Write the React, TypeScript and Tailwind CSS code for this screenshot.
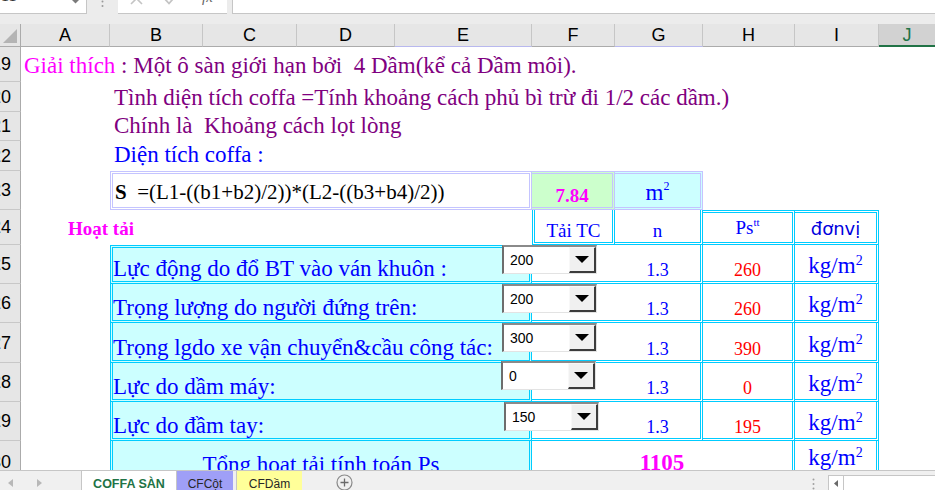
import React from "react";

const COLS = "grid grid-cols-[21px_89px_93px_94px_98px_137px_83px_88px_92px_84px_1fr]";

function RowHead({ n }: { n: string }) {
  return (
    <div className="flex items-center justify-end overflow-hidden border-b border-r border-b-[#c8c8c8] border-r-[#ababab] bg-[#e6e6e6] pr-[9px] font-['Liberation_Sans',sans-serif] text-[18px] leading-none text-black">
      <span className="whitespace-nowrap">{n}</span>
    </div>
  );
}

function Row({ h, n, children }: { h: string; n: string; children?: React.ReactNode }) {
  return (
    <div className={`${COLS} ${h}`}>
      <RowHead n={n} />
      {children}
    </div>
  );
}

function Combo({ v, pos }: { v: string; pos: string }) {
  return (
    <div
      className={`absolute z-10 flex h-[29px] w-[95px] border-b border-l-2 border-r border-t-2 border-b-[#e3e3e3] border-l-[#6d6d6d] border-r-[#e3e3e3] border-t-[#8a8a8a] bg-white ${pos}`}
    >
      <div className="flex flex-1 items-center pl-[6px] font-['Liberation_Sans',sans-serif] text-[14px] leading-none text-black">
        {v}
      </div>
      <div className="flex w-[27px] items-center justify-center border-b-2 border-l border-r-2 border-t border-b-[#3c3c3c] border-l-[#f8f8f8] border-r-[#3c3c3c] border-t-[#f8f8f8] bg-[#f0f0f0]">
        <svg width="14" height="7" viewBox="0 0 14 7">
          <polygon points="0,0 14,0 7,7" fill="#000" />
        </svg>
      </div>
    </div>
  );
}

function KgM2({ pb }: { pb: string }) {
  return (
    <div
      className={`flex items-end justify-center border-b-[3px] border-r-[3px] border-double border-[#00ccff] text-[23px] leading-none text-[#0000ff] ${pb}`}
    >
      <span>
        kg/m<sup className="relative top-[-8px] text-[14px] leading-none">2</sup>
      </span>
    </div>
  );
}

function LoadRow({
  n,
  h,
  label,
  combo,
  ps,
  first,
  comboPos,
}: {
  n: string;
  h: string;
  label: string;
  combo: string;
  ps: string;
  first?: boolean;
  comboPos: string;
}) {
  const be = first
    ? "relative col-span-4 flex items-end whitespace-nowrap border-b-[3px] border-l-[3px] border-r-[3px] border-t-[3px] border-double border-[#00ccff] bg-[#ccffff] pb-[1px] text-[23px] leading-none text-[#0000ff]"
    : "relative col-span-4 flex items-end whitespace-nowrap border-b-[3px] border-l-[3px] border-r-[3px] border-double border-[#00ccff] bg-[#ccffff] pb-[1px] text-[23px] leading-none text-[#0000ff]";
  return (
    <Row h={h} n={n}>
      <div />
      <div className={be}>
        <span>{label}</span>
        <Combo v={combo} pos={comboPos} />
      </div>
      <div className="col-span-2 grid grid-cols-[83px_1fr] border-b-[3px] border-r-[3px] border-double border-[#00ccff]">
        <div />
        <div className="flex items-end justify-center pb-[2px] text-[18px] leading-none text-[#0000ff]">1.3</div>
      </div>
      <div className="flex items-end justify-center border-b-[3px] border-r-[3px] border-double border-[#00ccff] pb-[2px] text-[18px] leading-none text-[#ff0000]">
        {ps}
      </div>
      <KgM2 pb="pb-[4px]" />
    </Row>
  );
}

const LETTERS = ["A", "B", "C", "D", "E", "F", "G", "H", "I"];

export default function App() {
  return (
    <div className="flex h-[490px] w-[935px] flex-col overflow-hidden bg-white font-['Liberation_Serif',serif]">
      {/* formula bar (cut off at top) */}
      <div className="flex h-[24px] shrink-0 items-start bg-[#ececec]">
        <div className="flex h-[14px] w-[87px] justify-between overflow-hidden border-b border-r border-[#c6c6c6] bg-white">
          <div className="mt-[-12px] pl-[1px] font-['Liberation_Serif',serif] text-[16px] leading-none text-[#333]">11</div>
          <svg className="mr-[7px] mt-[0px]" width="7" height="4" viewBox="0 0 7 4">
            <polygon points="0,0 7,0 3.5,3.5" fill="#7a7a7a" />
          </svg>
        </div>
        <div className="flex h-[14px] w-[31px] justify-center">
          <svg width="3" height="8" viewBox="0 0 3 8">
            <circle cx="1.5" cy="1.5" r="1" fill="#9a9a9a" />
            <circle cx="1.5" cy="6" r="1" fill="#9a9a9a" />
          </svg>
        </div>
        <div className="flex h-[14px] w-[109px] items-start overflow-hidden border-b border-[#c6c6c6] bg-white">
          <svg className="ml-[12px] mt-[-8px]" width="13" height="13" viewBox="0 0 13 13">
            <path d="M1 1 L12 12 M12 1 L1 12" stroke="#c4c4c4" strokeWidth="1.6" />
          </svg>
          <svg className="ml-[20px] mt-[-9px]" width="17" height="14" viewBox="0 0 17 14">
            <path d="M1 7 L6 12.5 L16 1" stroke="#c4c4c4" strokeWidth="1.8" fill="none" />
          </svg>
          <div className="ml-[22px] mt-[-10px] font-['Liberation_Serif',serif] text-[15px] italic leading-none text-[#666]">fx</div>
        </div>
        <div className="ml-[5px] h-[14px] flex-1 border-b border-l border-[#c6c6c6] bg-white" />
      </div>

      {/* sheet */}
      <div className="flex-1 overflow-hidden">
        {/* column headers */}
        <div className={`${COLS} h-[23px] bg-[#e6e6e6] font-['Liberation_Sans',sans-serif] text-[18px] leading-none text-black`}>
          <div className="relative border-b border-r border-b-[#ababab] border-r-[#ababab]">
            <svg className="absolute left-[2px] top-[4px]" width="16" height="16" viewBox="0 0 16 16">
              <polygon points="15,1 15,15 1,15" fill="#b4b4b4" />
            </svg>
          </div>
          {LETTERS.map((l) => (
            <div
              key={l}
              className={
                l === "E" || l === "G"
                  ? "flex items-center justify-center border-b border-r border-b-[#b8b8ee] border-r-[#c6c6c6]"
                  : "flex items-center justify-center border-b border-r border-b-[#ababab] border-r-[#c6c6c6]"
              }
            >
              {l}
            </div>
          ))}
          <div className="flex items-center justify-center border-b-2 border-[#217346] bg-[#d2d2d2] text-[#217346]">J</div>
        </div>

        {/* row 19 */}
        <Row h="h-[35px]" n="19">
          <div className="col-span-10 flex items-end whitespace-pre pb-[5px] pl-[3px] text-[23px] leading-none">
            <span className="text-[#ff00ff]">Giải thích</span>
            <span className="text-[#800080]"> : Một ô sàn giới hạn bởi  4 Dầm(kể cả Dầm môi).</span>
          </div>
        </Row>

        {/* row 20 */}
        <Row h="h-[30px]" n="20">
          <div />
          <div className="col-span-9 flex items-end whitespace-pre pb-[3px] pl-[4px] text-[23px] leading-none text-[#800080]">
            Tình diện tích coffa =Tính khoảng cách phủ bì trừ đi 1/2 các dầm.)
          </div>
        </Row>

        {/* row 21 */}
        <Row h="h-[29px]" n="21">
          <div />
          <div className="col-span-9 flex items-end whitespace-pre pb-[4px] pl-[4px] text-[23px] leading-none text-[#800080]">
            Chính là  Khoảng cách lọt lòng
          </div>
        </Row>

        {/* row 22 */}
        <Row h="h-[30px]" n="22">
          <div />
          <div className="col-span-9 flex items-end whitespace-pre pb-[5px] pl-[4px] text-[23px] leading-none text-[#0000ff]">
            Diện tích coffa :
          </div>
        </Row>

        {/* row 23 */}
        <Row h="h-[39px]" n="23">
          <div />
          <div className="col-span-4 flex items-end whitespace-pre border-[3px] border-double border-[#c4c4ff] pb-[4px] pl-[2px] text-[21px] leading-none text-black">
            <b>S</b>
            <span>  =(L1-((b1+b2)/2))*(L2-((b3+b4)/2))</span>
          </div>
          <div className="flex items-end justify-center border-b-[3px] border-r-[3px] border-t-[3px] border-double border-[#c4c4ff] bg-[#ccffcc] pb-[2px] text-[19px] font-bold leading-none text-[#ff00ff]">
            7.84
          </div>
          <div className="flex items-end justify-center border-b-[3px] border-r-[3px] border-t-[3px] border-double border-[#c4c4ff] bg-[#ccffff] pb-[3px] text-[23px] leading-none text-[#0000ff]">
            <span>
              m<sup className="relative top-[-10px] text-[12px] leading-none">2</sup>
            </span>
          </div>
        </Row>

        {/* row 24 */}
        <Row h="h-[35px]" n="24">
          <div className="col-span-5 flex items-end whitespace-pre pb-[7px] pl-[47px] text-[19px] font-bold leading-none text-[#ff00ff]">
            Hoạt tải
          </div>
          <div className="flex items-end justify-center border-b-[3px] border-l-[3px] border-r-[3px] border-double border-[#00ccff] pb-[2px] text-[19px] leading-none text-[#0000ff]">
            Tải TC
          </div>
          <div className="flex items-end justify-center border-b-[3px] border-r-[3px] border-double border-[#00ccff] pb-[2px] text-[19px] leading-none text-[#0000ff]">
            n
          </div>
          <div className="flex items-end justify-center border-b-[3px] border-r-[3px] border-t-[3px] border-double border-[#00ccff] pb-[5px] text-[19px] leading-none text-[#0000ff]">
            <span>
              Ps<sup className="relative top-[-8px] text-[11px] leading-none">tt</sup>
            </span>
          </div>
          <div className="flex items-end justify-center border-b-[3px] border-r-[3px] border-t-[3px] border-double border-[#00ccff] pb-[4px] font-['DejaVu_Sans',sans-serif] text-[18px] leading-none text-[#0000dd]">
            đơnvị
          </div>
        </Row>

        <LoadRow n="25" h="h-[39px]" label="Lực động do đổ BT vào ván khuôn :" combo="200" ps="260" first comboPos="left-[389px] top-[-3px]" />
        <LoadRow n="26" h="h-[39px]" label="Trọng lượng do người đứng trên:" combo="200" ps="260" comboPos="left-[389px] top-0" />
        <LoadRow n="27" h="h-[40px]" label="Trọng lgdo xe vận chuyển&cầu công tác:" combo="300" ps="390" comboPos="left-[389px] top-0" />
        <LoadRow n="28" h="h-[39px]" label="Lực do dầm máy:" combo="0" ps="0" comboPos="left-[388px] top-[-2px]" />
        <LoadRow n="29" h="h-[39px]" label="Lực do đầm tay:" combo="150" ps="195" comboPos="left-[391px] top-0" />

        {/* row 30 */}
        <Row h="h-[42px]" n="30">
          <div />
          <div className="col-span-4 flex items-end justify-center whitespace-nowrap border-b-[3px] border-l-[3px] border-r-[3px] border-double border-[#00ccff] bg-[#ccffff] pb-[4px] text-[23px] leading-none text-[#0000ff]">
            Tổng hoạt tải tính toán Ps
          </div>
          <div className="col-span-3 flex items-end justify-center border-b-[3px] border-r-[3px] border-double border-[#00ccff] pb-[6px] text-[23px] font-bold leading-none text-[#ff00ff]">
            1105
          </div>
          <KgM2 pb="pb-[11px]" />
        </Row>
      </div>

      {/* sheet tabs */}
      <div className="flex h-[20px] shrink-0 items-stretch border-t border-[#c6c6c6] bg-[#f0f0f0] font-['Liberation_Sans',sans-serif] leading-none">
        <div className="flex w-[82px] items-center gap-[24px] border-r border-[#c6c6c6] pl-[8px] pt-[4px]">
          <svg width="5" height="8" viewBox="0 0 5 8">
            <polygon points="5,0 5,8 0,4" fill="#b8b8b8" />
          </svg>
          <svg width="5" height="8" viewBox="0 0 5 8">
            <polygon points="0,0 0,8 5,4" fill="#b8b8b8" />
          </svg>
        </div>
        <div className="flex w-[94px] items-end justify-center bg-white text-[12.5px] font-bold text-[#217346]">COFFA SÀN</div>
        <div className="flex w-[57px] items-end justify-center border-l border-[#c6c6c6] bg-[#9f9ff7] text-[12px] text-[#262626]">CFCột</div>
        <div className="w-[4px] border-r border-[#c6c6c6]" />
        <div className="flex w-[65px] items-end justify-center bg-[#ffff99] text-[12px] text-[#262626]">CFDầm</div>
        <div className="flex items-center pl-[34px] pt-[4px]">
          <svg width="17" height="17" viewBox="0 0 17 17">
            <circle cx="8.5" cy="8.5" r="7.5" fill="none" stroke="#8a8a8a" strokeWidth="1.2" />
            <path d="M8.5 4.5 V12.5 M4.5 8.5 H12.5" stroke="#6a6a6a" strokeWidth="1.3" />
          </svg>
        </div>
        <div className="flex-1" />
        <div className="flex w-[16px] items-center justify-start pt-[6px]">
          <svg width="3" height="12" viewBox="0 0 3 12">
            <circle cx="1.5" cy="1.5" r="1" fill="#a0a0a0" />
            <circle cx="1.5" cy="6" r="1" fill="#a0a0a0" />
            <circle cx="1.5" cy="10.5" r="1" fill="#a0a0a0" />
          </svg>
        </div>
        <div className="mt-[4px] flex w-[107px] border-l border-t border-[#c6c6c6] bg-white">
          <div className="flex w-[15px] items-center justify-center border-r border-[#c6c6c6]">
            <svg width="4" height="7" viewBox="0 0 4 7">
              <polygon points="4,0 4,7 0,3.5" fill="#6a6a6a" />
            </svg>
          </div>
        </div>
      </div>
    </div>
  );
}
